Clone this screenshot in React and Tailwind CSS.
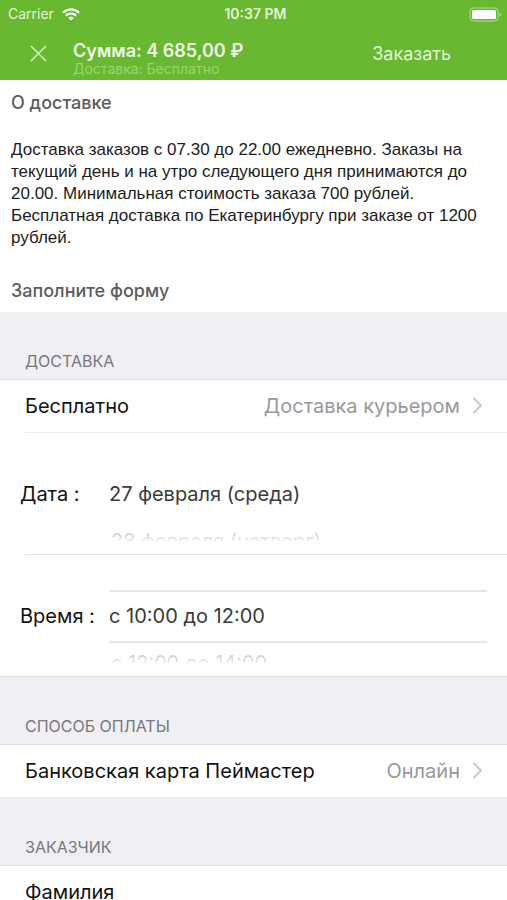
import React, { useState } from 'react';

const dates = ['27 февраля (среда)', '28 февраля (четверг)'];
const times = ['с 10:00 до 12:00', 'с 12:00 до 14:00'];

const StatusBar = () => {
  return (
    <div className="grid grid-cols-3 items-center h-7 pl-2 pr-1 text-sm text-[#e4f6d6]">
      <div className="flex items-center gap-2">
        <span>Carrier</span>
        <svg viewBox="0 0 18 13" className="w-[18px] h-[13px]" fill="none" stroke="#fff" strokeWidth="2.3" aria-hidden="true">
          <path d="M1 4.6C5.6.3 12.4.3 17 4.6" />
          <path d="M3.9 7.7c3-2.7 7.2-2.7 10.2 0" />
          <path d="M9 12.6 6.3 9.9c1.6-1.4 3.8-1.4 5.4 0z" fill="#fff" stroke="none" />
        </svg>
      </div>
      <span className="text-center font-semibold">10:37 PM</span>
      <svg viewBox="0 0 34 15" className="w-[34px] h-[15px] justify-self-end" aria-hidden="true">
        <rect x="1" y="1" width="28" height="13" rx="3.5" fill="none" stroke="#b5dd98" />
        <rect x="3" y="3" width="24" height="9" rx="1.5" fill="#fff" />
        <path d="M30.5 5.5c1.8.6 1.8 3.4 0 4z" fill="#b5dd98" />
      </svg>
    </div>
  );
};

const Header = () => {
  return (
    <header className="shrink-0 bg-[#68b832]">
      <StatusBar />
      <div className="flex items-center h-[52px] pl-[30px] pr-14">
        <button type="button" aria-label="Закрыть" className="mr-[26px] pb-0.5">
          <svg viewBox="0 0 17 17" className="w-[17px] h-[17px]" stroke="#e4f6d6" strokeWidth="1.3" aria-hidden="true">
            <path d="M1 1l15 15M16 1L1 16" />
          </svg>
        </button>
        <div className="flex-1 pt-2.5">
          <h1 className="text-lg leading-5 font-semibold text-[#f1fbe9]">Сумма: 4 685,00 ₽</h1>
          <p className="text-sm leading-4 text-[#9bd472]">Доставка: Бесплатно</p>
        </div>
        <button type="button" className="text-lg text-[#e4f6d6]">Заказать</button>
      </div>
    </header>
  );
};

const SectionTitle = ({ children }) => {
  return (
    <h2 className="flex items-end h-[68px] pb-2 pl-[25px] bg-[#efeff4] border-b border-[#dfdfe3] text-base leading-5 text-[#77777c] uppercase">
      {children}
    </h2>
  );
};

const LinkRow = ({ title, value }) => {
  return (
    <button type="button" className="flex items-center w-full h-[52px] pl-[25px] pr-6 text-xl text-left">
      <span className="flex-1 text-[#111]">{title}</span>
      <span className="text-[#98989c]">{value}</span>
      <svg viewBox="0 0 11 17" className="w-[11px] h-[17px] ml-3 mb-0.5" fill="none" stroke="#c7c7cc" strokeWidth="2" aria-hidden="true">
        <path d="M1.5 1l7.5 7.5L1.5 16" />
      </svg>
    </button>
  );
};

const WheelRow = ({ label, name, options, lineClass }) => {
  const [selected, setSelected] = useState(options[0]);

  return (
    <fieldset aria-label={name} className="flex items-center h-[121px] px-5 text-xl">
      <span className="w-[89px] text-[#111]">{label}</span>
      <div className="flex-1 h-[94px] pt-[21px] overflow-hidden">
        {options.map((option) => (
          <label
            key={option}
            className={
              option === selected
                ? `relative flex items-center h-[53px] border-y-2 text-[#3a3a3a] ${lineClass}`
                : 'relative flex items-center h-10 pl-0.5 bg-linear-to-b from-[#ccc] from-30% to-white to-60% bg-clip-text text-transparent'
            }
          >
            <input
              type="radio"
              name={name}
              className="sr-only"
              checked={option === selected}
              onChange={() => setSelected(option)}
            />
            {option}
          </label>
        ))}
      </div>
    </fieldset>
  );
};

const App = () => {
  return (
    <div className="flex flex-col h-screen bg-white font-['Inter','Liberation_Sans',sans-serif]">
      <Header />
      <main className="flex-1 overflow-y-auto [scrollbar-width:none]">
        <section className="px-[11px] pt-[9px]">
          <h2 className="text-lg font-medium text-[#5c5c5c]">О доставке</h2>
          <p className="mt-[22px] text-[17px] leading-[22px] text-[#1c1c1c] font-['Liberation_Sans',sans-serif]">
            Доставка заказов с 07.30 до 22.00 ежедневно. Заказы на текущий день и на утро следующего дня принимаются до
            20.00. Минимальная стоимость заказа 700 рублей. Бесплатная доставка по Екатеринбургу при заказе от 1200
            рублей.
          </p>
          <h2 className="mt-7 pb-[7px] text-lg font-medium text-[#5c5c5c]">Заполните форму</h2>
        </section>

        <form>
          <SectionTitle>Доставка</SectionTitle>
          <LinkRow title="Бесплатно" value="Доставка курьером" />
          <hr className="ml-[25px] border-[#ececee]" />
          <WheelRow label="Дата :" name="Дата" options={dates} lineClass="border-transparent" />
          <hr className="ml-[25px] border-[#e2e2e4]" />
          <WheelRow label="Время :" name="Время" options={times} lineClass="border-[#e6e6e6]" />

          <div className="border-t border-[#dfdfe3]">
            <SectionTitle>Способ оплаты</SectionTitle>
            <LinkRow title="Банковская карта Пеймастер" value="Онлайн" />
          </div>

          <div className="border-t border-[#e6e6ea]">
            <SectionTitle>Заказчик</SectionTitle>
            <div className="flex items-center h-[52px] pl-[25px] pr-6 text-xl">
              <label htmlFor="surname" className="text-[#111]">Фамилия</label>
              <input id="surname" type="text" className="flex-1 min-w-0 ml-4 text-right text-[#98989c] outline-none" />
            </div>
          </div>
        </form>
      </main>
    </div>
  );
};

export default App;
